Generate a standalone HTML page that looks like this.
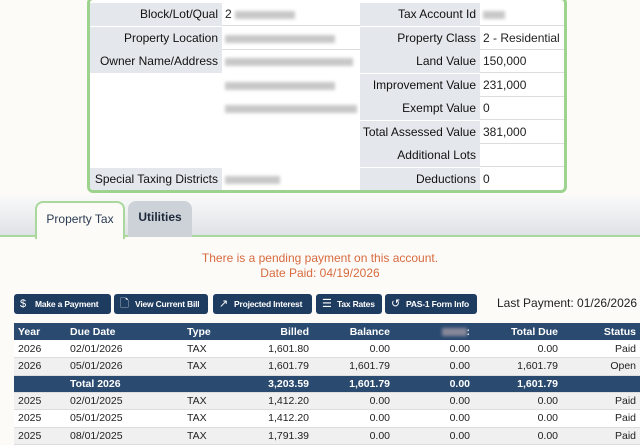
<!DOCTYPE html>
<html><head><style>
*{box-sizing:border-box;margin:0;padding:0}
body{width:640px;height:443px;overflow:hidden;background:#fcfbf8;font-family:"Liberation Sans",sans-serif;color:#222;position:relative}
.box{position:absolute;left:87px;top:-3px;width:480px;height:196px;border:3px solid #9ed38f;border-radius:6px;background:#fff;overflow:hidden}
.c{position:absolute;height:23px;font-size:12px;line-height:23px;white-space:nowrap}
.l{background:#e4e7eb;text-align:right;padding-right:4px;color:#111}
.v{padding-left:3px;border-bottom:1px solid #ddd}
.blur{display:inline-block;height:8px;background:#c8c8c8;filter:blur(1.5px);vertical-align:middle}
.tabbar{position:absolute;left:0;top:195px;width:640px;height:42px;background:linear-gradient(#fafafa,#dfe2e6);border-bottom:2px solid #a9d79c}
.tab{position:absolute;top:6px;height:36px;border-radius:8px 8px 0 0;font-size:12px;text-align:center;line-height:32px}
.msg{position:absolute;left:0;width:640px;text-align:center;color:#d86a3e;font-size:12px}
.btn{position:absolute;top:294px;height:20px;background:#1e3c60;border-radius:3px;color:#fff;font-size:8.5px;font-weight:bold;line-height:20px;padding-left:21px;white-space:nowrap;overflow:hidden;letter-spacing:-0.2px}
.btn i{position:absolute;left:6px;top:0;font-style:normal;font-size:11px;font-weight:normal}
table{position:absolute;left:14px;top:323px;width:626px;border-collapse:collapse;font-size:10.5px}
td,th{height:17.5px;padding:0 4px}
th{background:#2a4a70;color:#fff;font-weight:bold;text-align:left;height:17px}
tr.t td{background:#2a4a70;color:#fff;font-weight:bold;height:17px}
tr.a td{background:#fff}
tr.b td{background:#f0f0f0}
td{border-bottom:1px solid #ddd}
.r{text-align:right}
</style></head><body>
<div class="box">
 <div class="c l" style="left:0;top:3px;width:132px">Block/Lot/Qual</div>
 <div class="c v" style="left:132px;top:3px;width:138px">2 <span class="blur" style="width:60px"></span></div>
 <div class="c l" style="left:270px;top:3px;width:120px">Tax Account Id</div>
 <div class="c v" style="left:390px;top:3px;width:90px"><span class="blur" style="width:22px"></span></div>

 <div class="c l" style="left:0;top:27px;width:132px">Property Location</div>
 <div class="c v" style="left:132px;top:27px;width:138px"><span class="blur" style="width:110px"></span></div>
 <div class="c l" style="left:270px;top:27px;width:120px">Property Class</div>
 <div class="c v" style="left:390px;top:27px;width:90px">2 - Residential</div>

 <div class="c l" style="left:0;top:50px;width:132px">Owner Name/Address</div>
 <div class="c" style="left:132px;top:50px;width:138px;padding-left:3px"><span class="blur" style="width:128px"></span></div>
 <div class="c l" style="left:270px;top:50px;width:120px">Land Value</div>
 <div class="c v" style="left:390px;top:50px;width:90px">150,000</div>

 <div class="c" style="left:132px;top:74px;width:138px;padding-left:3px"><span class="blur" style="width:110px"></span></div>
 <div class="c l" style="left:270px;top:74px;width:120px">Improvement Value</div>
 <div class="c v" style="left:390px;top:74px;width:90px">231,000</div>

 <div class="c" style="left:132px;top:97px;width:138px;padding-left:3px"><span class="blur" style="width:132px"></span></div>
 <div class="c l" style="left:270px;top:97px;width:120px">Exempt Value</div>
 <div class="c v" style="left:390px;top:97px;width:90px">0</div>

 <div class="c l" style="left:270px;top:121px;width:120px">Total Assessed Value</div>
 <div class="c v" style="left:390px;top:121px;width:90px">381,000</div>

 <div class="c l" style="left:270px;top:144px;width:120px">Additional Lots</div>
 <div class="c v" style="left:390px;top:144px;width:90px"></div>

 <div class="c l" style="left:0;top:168px;width:132px">Special Taxing Districts</div>
 <div class="c" style="left:132px;top:168px;width:138px;padding-left:3px"><span class="blur" style="width:55px"></span></div>
 <div class="c l" style="left:270px;top:168px;width:120px">Deductions</div>
 <div class="c" style="left:390px;top:168px;width:90px;padding-left:3px">0</div>
</div>

<div class="tabbar">
 <div class="tab" style="left:35px;width:90px;background:#fcfbf8;border:2px solid #a9d79c;border-bottom:none;height:38px;color:#2a3b52">Property Tax</div>
 <div class="tab" style="left:128px;width:64px;background:#cdd2d9;font-weight:bold;color:#1e2a3a">Utilities</div>
</div>

<div class="msg" style="top:251px">There is a pending payment on this account.</div>
<div class="msg" style="top:266px">Date Paid: 04/19/2026</div>

<div class="btn" style="left:14px;width:97px"><i>$</i>Make a Payment</div>
<div class="btn" style="left:114px;width:94px"><i>&#x1F5CB;</i>View Current Bill</div>
<div class="btn" style="left:213px;width:99px"><i>&#x2197;</i>Projected Interest</div>
<div class="btn" style="left:316px;width:66px"><i>&#x2630;</i>Tax Rates</div>
<div class="btn" style="left:385px;width:92px"><i>&#x21BA;</i>PAS-1 Form Info</div>
<div style="position:absolute;left:497px;top:296px;font-size:12px;white-space:nowrap">Last Payment: 01/26/2026</div>

<table>
<tr><th style="width:52px">Year</th><th style="width:117px">Due Date</th><th style="width:70px">Type</th><th class="r" style="width:60px">Billed</th><th class="r" style="width:81px">Balance</th><th class="r" style="width:80px"><span class="blur" style="width:25px;background:#889"></span>:</th><th class="r" style="width:88px">Total Due</th><th class="r">Status</th></tr>
<tr class="a"><td>2026</td><td>02/01/2026</td><td>TAX</td><td class="r">1,601.80</td><td class="r">0.00</td><td class="r">0.00</td><td class="r">0.00</td><td class="r">Paid</td></tr>
<tr class="b"><td>2026</td><td>05/01/2026</td><td>TAX</td><td class="r">1,601.79</td><td class="r">1,601.79</td><td class="r">0.00</td><td class="r">1,601.79</td><td class="r">Open</td></tr>
<tr class="t"><td></td><td>Total 2026</td><td></td><td class="r">3,203.59</td><td class="r">1,601.79</td><td class="r">0.00</td><td class="r">1,601.79</td><td></td></tr>
<tr class="b"><td>2025</td><td>02/01/2025</td><td>TAX</td><td class="r">1,412.20</td><td class="r">0.00</td><td class="r">0.00</td><td class="r">0.00</td><td class="r">Paid</td></tr>
<tr class="a"><td>2025</td><td>05/01/2025</td><td>TAX</td><td class="r">1,412.20</td><td class="r">0.00</td><td class="r">0.00</td><td class="r">0.00</td><td class="r">Paid</td></tr>
<tr class="b"><td>2025</td><td>08/01/2025</td><td>TAX</td><td class="r">1,791.39</td><td class="r">0.00</td><td class="r">0.00</td><td class="r">0.00</td><td class="r">Paid</td></tr>
</table>
</body></html>
